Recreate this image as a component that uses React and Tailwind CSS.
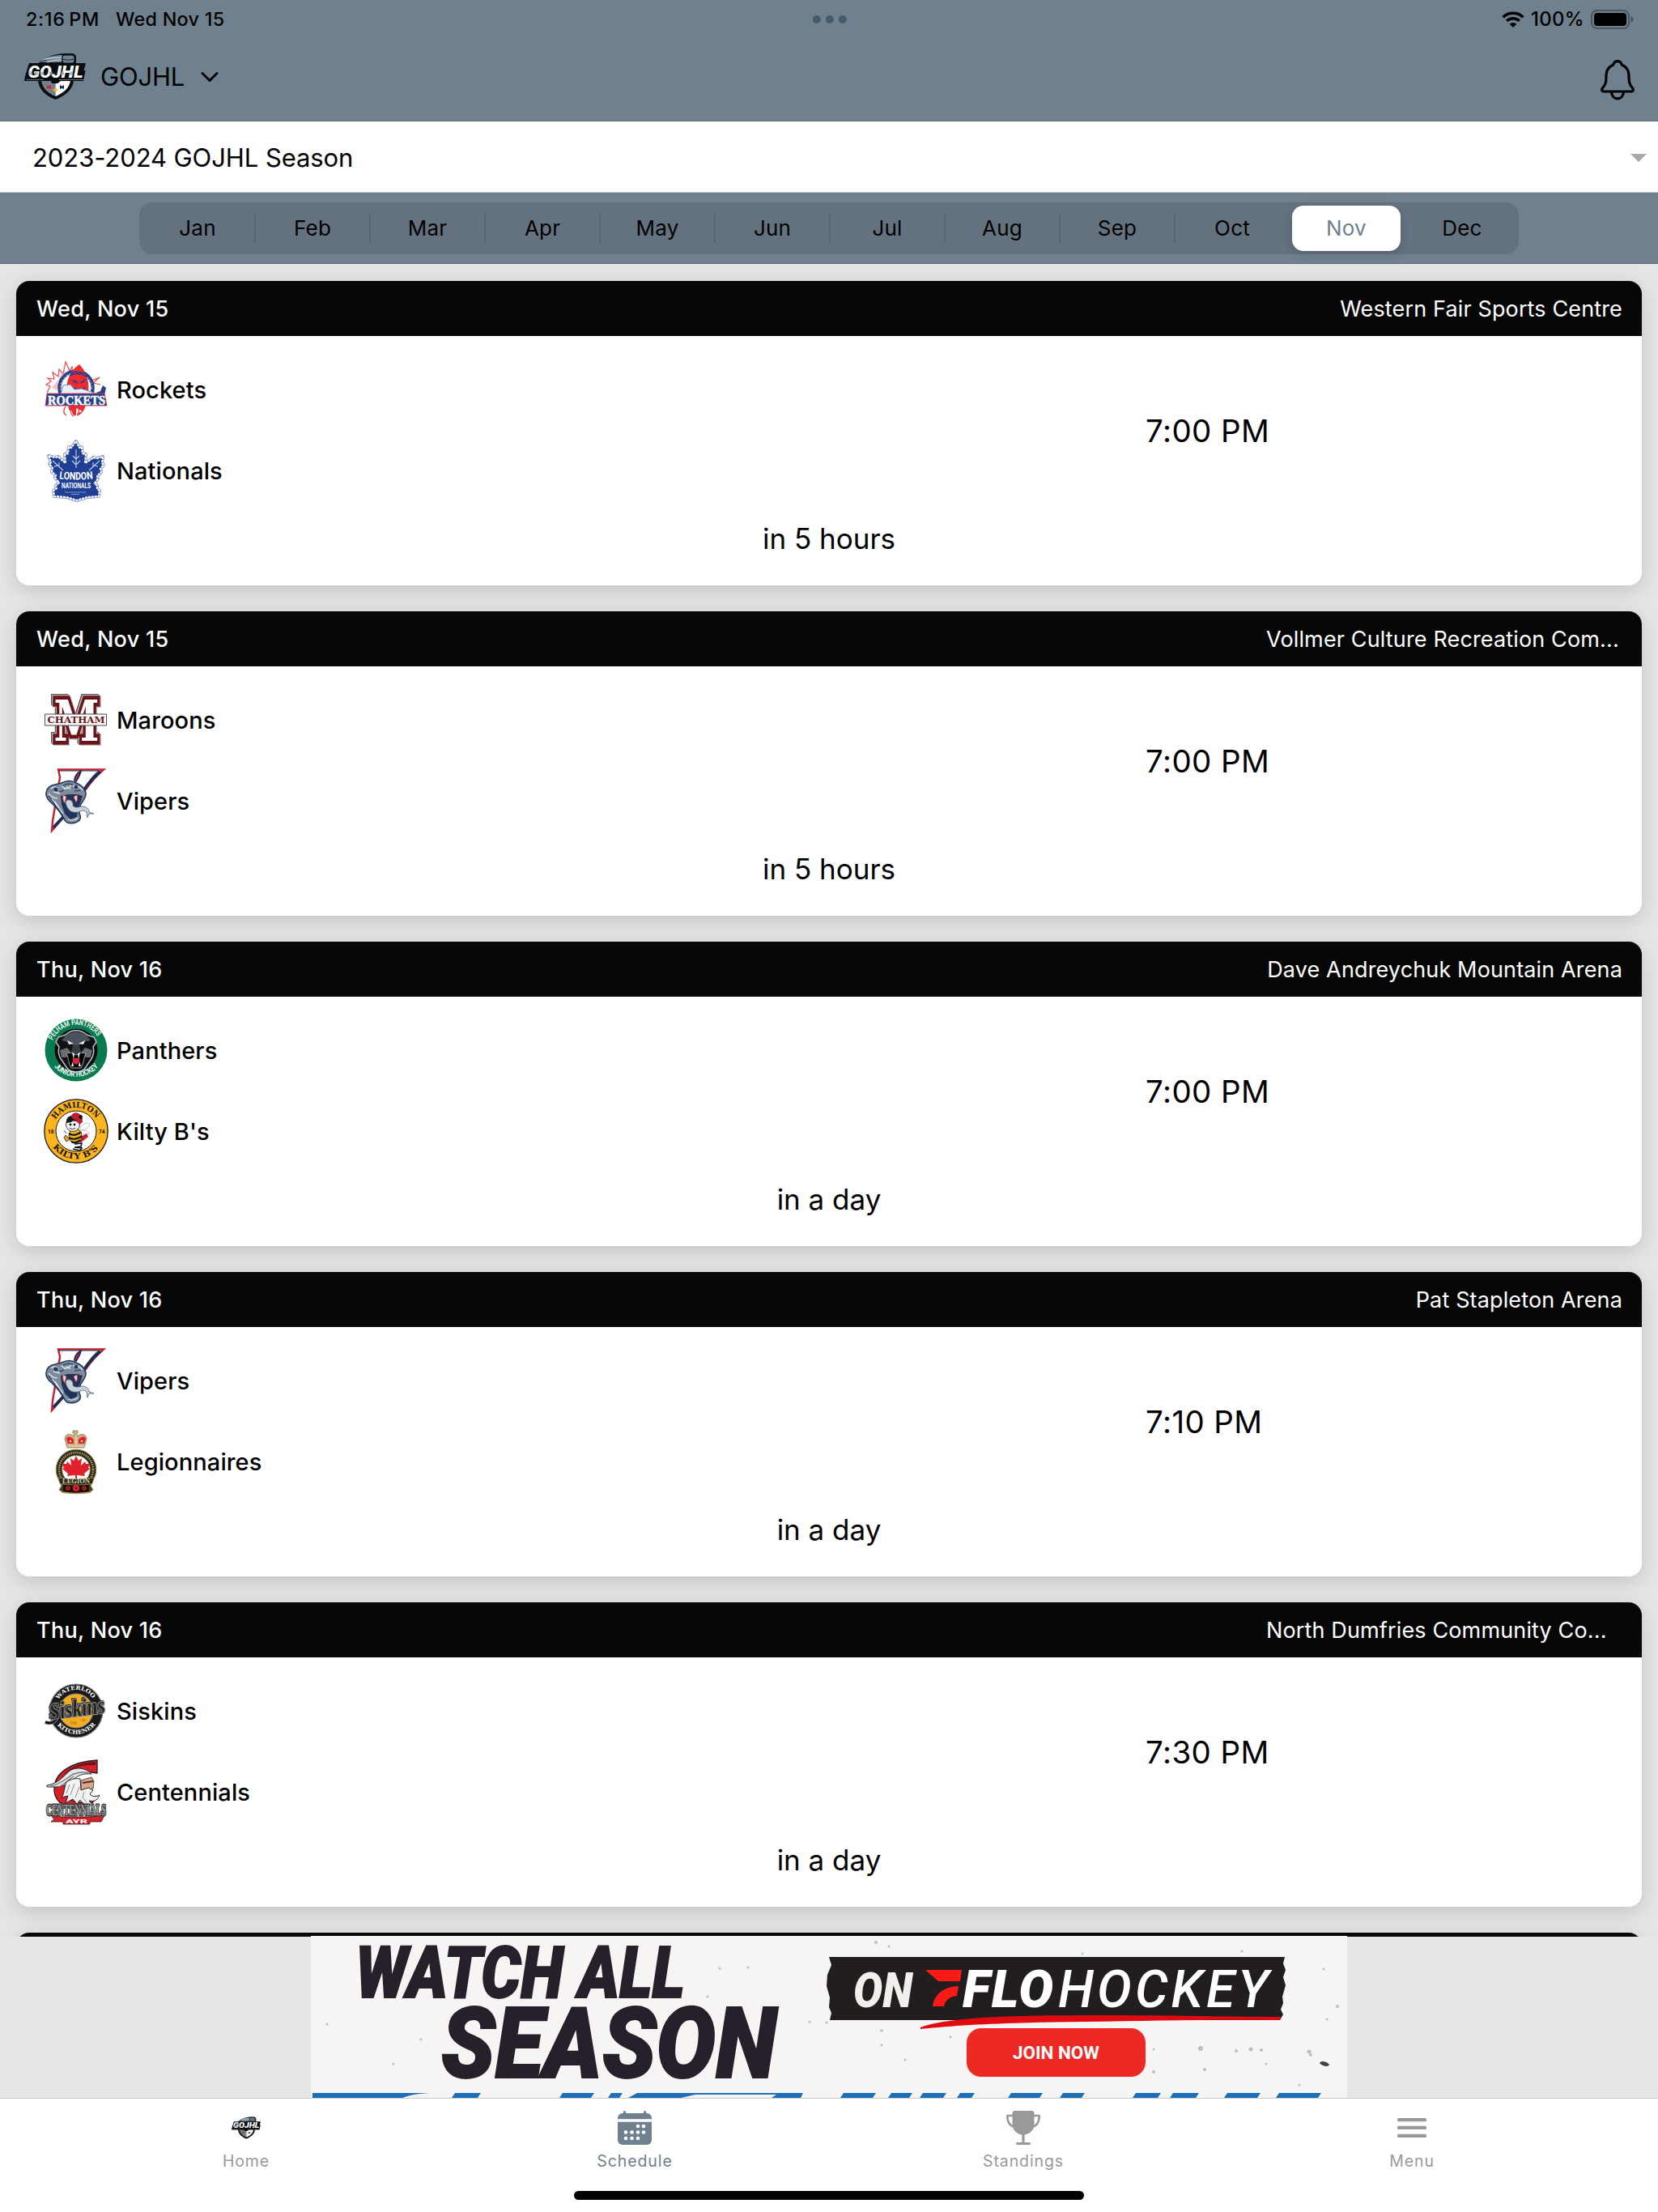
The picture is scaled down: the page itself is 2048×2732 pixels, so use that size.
const MONTHS = ['Jan', 'Feb', 'Mar', 'Apr', 'May', 'Jun', 'Jul', 'Aug', 'Sep', 'Oct', 'Nov', 'Dec'];
const SELECTED_MONTH = 'Nov';

// iPadOS glyphs
function WifiIcon() {
  return (
    <svg width="28" height="20" viewBox="0 0 28 20" fill="none" stroke="#000" strokeWidth="3.6">
      <path d="M1.6 7.2a18 18 0 0 1 24.8 0" />
      <path d="M6.2 11.8a11.4 11.4 0 0 1 15.6 0" />
      <path d="M14 20l-4.3-4.3a6.2 6.2 0 0 1 8.6 0z" fill="#000" stroke="none" />
    </svg>
  );
}

function BatteryIcon() {
  return (
    <svg width="54" height="24" viewBox="0 0 54 24">
      <rect x="1" y="1" width="46" height="22" rx="6.5" fill="none" stroke="#465865" strokeWidth="2" />
      <rect x="4" y="4" width="40" height="16" rx="4" fill="#000" />
      <path d="M49.5 8c2 .6 3 2.2 3 4s-1 3.4-3 4z" fill="#465865" />
    </svg>
  );
}

function BellIcon() {
  return (
    <svg width="42" height="50" viewBox="0 0 42 50" fill="none" stroke="#000" strokeWidth="3.2" strokeLinejoin="round">
      <path d="M21 1.7c-2.9 0-4.6 1.6-5.2 4.3C10.2 8.4 7 12.8 7 19c0 8.5-.6 11.3-4.4 15.6-1.8 2.2-1 4.4 1.4 4.4h34c2.4 0 3.2-2.2 1.4-4.4C35.6 30.3 35 27.5 35 19c0-6.2-3.2-10.6-8.8-13-.6-2.7-2.3-4.3-5.2-4.3z" />
      <path d="M13.5 39.5c.3 5 3.2 8.3 7.5 8.3s7.2-3.3 7.5-8.3" />
    </svg>
  );
}

function CalendarIcon() {
  const dots = [[25, 19], [32, 19], [10, 26.5], [17.5, 26.5], [25, 26.5], [32, 26.5], [10, 34], [17.5, 34], [25, 34]];
  return (
    <svg width="42" height="42" viewBox="0 0 42 42" fill="#6f808e">
      <path d="M6 3h1V1.500a1.500 1.500 0 0 1 3 0V3h22V1.500a1.500 1.500 0 0 1 3 0V3h1a6 6 0 0 1 6 6v1.300H0V9a6 6 0 0 1 6-6z" />
      <path d="M0 13.700h42V36a6 6 0 0 1-6 6H6a6 6 0 0 1-6-6z" />
      {dots.map(([x, y], i) => <circle key={i} cx={x} cy={y} r="2.3" fill="#fff" />)}
    </svg>
  );
}

function TrophyIcon() {
  return (
    <svg width="42" height="42" viewBox="0 0 42 42" fill="#999">
      <path d="M11 0h20a3 3 0 0 1 3.500 3v14C34.500 24 28 29.700 21 29.700S7.500 24 7.500 17V3A3 3 0 0 1 11 0z" />
      <path d="M8 6H1.500C1 12 3 17 8.500 19.500M34 6h6.500C41 12 39 17 33.500 19.500" fill="none" stroke="#999" strokeWidth="2.6" />
      <path d="M19.400 28h3.200v11.200h-3.200z" />
      <rect x="12" y="39" width="18" height="3" rx="1.5" />
    </svg>
  );
}

function MenuIcon() {
  return (
    <svg width="36" height="24" viewBox="0 0 36 24" fill="#999">
      <rect y="0" width="36" height="4.3" rx="1.6" />
      <rect y="9.8" width="36" height="4.3" rx="1.6" />
      <rect y="19.7" width="36" height="4.3" rx="1.6" />
    </svg>
  );
}

// League and team marks
function LeagueLogo({ className }) {
  return (
    <svg className={className} viewBox="0 0 76 57" overflow="visible">
      <path d="M17 32h44c0 12-10 20-22.500 25C26 52 17 44 17 32z" fill="#0a0d10" />
      <path d="M21 33h17.500v20C29 49 22 43 21 33z" fill="#6f808e" />
      <path d="M38.500 33H57c-1 10-9 16-18.500 20z" fill="#fff" />
      <path d="M28 39l2.500 1.500L33 39v5l-2.500-1-2.500 1z" fill="#d8232e" />
      <path d="M44 39l2.500 1.500L49 39v5l-2.500-1-2.500 1z" fill="#1b2a6b" />
      <path d="M38.500 41.500l1.300 2.300 2.400 1.200-2.400 1.200-1.300 2.300-1.300-2.300-2.400-1.200 2.400-1.200z" fill="#f5b323" />
      <path d="M16 13C26 5 36 0 52 0h6c4 0 6 2 6 5v8z" fill="#0a0d10" />
      <path d="M23 7C32 3 40 2 47 2l-1 9H17c5-1 8-2 11-3z" fill="#6f8896" />
      <path d="M22 8.500C31 5 40 5 46 5M28 11c8-3 14-3 18-3" stroke="#dfe6ea" fill="none" />
      <rect x="47" y="2" width="15" height="10" rx="3" fill="#6f808e" stroke="#0a0d10" />
      <path d="M48 7c4 1.500 9 1.500 13 0" stroke="#0a0d10" strokeWidth=".8" fill="none" />
      <path d="M6 12h70l-2.500 9h2L73 34H45l-4 3h-7l-1-3H0l1-6z" fill="#0a0d10" />
      <text x="4.5" y="29.5" textLength="68" lengthAdjust="spacingAndGlyphs" fontFamily="Roboto" fontWeight="900" fontStyle="italic" fontSize="21" fill="#fff">GOJHL</text>
      <path d="M5 24.500h4M12 24.500h5M20 24.500h4M31 24.500h4M45 24.500h4M56 24.500h4" stroke="#8fa0ac" strokeWidth="4" opacity=".7" />
      <path d="M3 32.400h21M43 32.400h30" stroke="#aab4bb" strokeWidth=".8" strokeDasharray="2 .6" />
    </svg>
  );
}

function RocketsLogo() {
  return (
    <svg width="80" height="80" viewBox="0 0 80 80" overflow="visible">
      <path d="M4 44l4-8-5-2 6-4-4-4 8 1-2-8 7 5 1-9 5 6 3-15 5 11 3-5 1 9M57 30l12-5-8 7 9 2" fill="none" stroke="#f0454a" strokeWidth="1.2" />
      <path d="M10 38l8-10 4-8 6-3-4 12-8 12z" fill="#f79a9b" opacity=".6" />
      <circle cx="40" cy="38" r="20.5" fill="#fff" stroke="#27408b" strokeWidth="4.5" />
      <circle cx="40" cy="38" r="19" fill="none" stroke="#fff" strokeWidth="1" strokeDasharray="2 2" />
      <path d="M29 53c-2-17-1-33 15-44 11 12 14 26 9 44-1 10-4 16-13 21-8-4-11-12-11-21z" fill="#ec2b32" />
      <path d="M32 23c8-4 15-3 21 1M33 21l6-3 12 2" stroke="#27408b" strokeWidth="1.6" fill="none" />
      <path d="M36 29l6 3M51 28l-5 4M38 38c4 3 9 3 13 0" stroke="#27408b" strokeWidth="2" fill="none" />
      <path d="M24 35l9-1 5 6 9-1 20 7-1 3H20z" fill="#e8f1f8" stroke="#5478b3" strokeWidth=".8" />
      <path d="M65 44l5-2 3-7 4 3-2 9-7 3z" fill="#27408b" />
      <path d="M30 60c-4 3-5 9-1 12 3 1 4-2 4-6 1 5 2 8 6 8 4-1 2-7 3-10 0 3 2 4 4 2" fill="none" stroke="#fff" strokeWidth="3" />
      <path d="M27 61c-3 4-3 9 1 11M34 64c-1 4 0 8 3 9M42 61c2 4 2 8-1 11" stroke="#ec2b32" strokeWidth="1.2" fill="none" />
      <path d="M4 45h71l3 15H2z" fill="#27408b" stroke="#ec2b32" strokeWidth=".8" />
      <text x="5" y="58.5" textLength="71" lengthAdjust="spacingAndGlyphs" fontFamily="Liberation Serif, serif" fontWeight="700" fontSize="17" fill="#fff" stroke="#fff" strokeWidth=".5">ROCKETS</text>
    </svg>
  );
}

function NationalsLogo() {
  const leaf = 'M40 4l4 8 3-1 1 8 4 1-1 11 8-5 2-2 5 1 7-2-1 8 2 2-4 5 1 4-5 5 1 3-4 6 3 3v4l3 2-1 7-14 1-13 4-13-4-15-1-1-7 4-3-1-3 4-4-5-6 1-3-5-4 1-5-4-5 2-2-3-8 8 2 4-1 3 3 6 5-1-11 4-1 1-8 3 1z';
  return (
    <svg width="80" height="80" viewBox="0 0 80 80" overflow="visible">
      <path d={leaf} fill="none" stroke="#8c9ccc" strokeWidth="4" strokeLinejoin="round" />
      <path d={leaf} fill="#1f3f95" stroke="#fff" strokeWidth="2.2" strokeDasharray="3 1" />
      <path d="M40 37V14M40 26l-4-4M40 26l4-4M40 33l-5-5M40 33l5-5M24 40L11 28M17 34l-4 1M19 36v-6M56 40l13-12M63 34l4 1M61 36v-6" stroke="#c4cee6" strokeWidth="1.1" fill="none" />
      <path id="london-arc" d="M18 50Q40 53 62 50" fill="none" />
      <text fontFamily="Roboto" fontWeight="700" fontSize="13" fill="#fff"><textPath href="#london-arc" startOffset="1" textLength="42" lengthAdjust="spacingAndGlyphs">LONDON</textPath></text>
      <text x="22" y="62" textLength="36" lengthAdjust="spacingAndGlyphs" fontFamily="Roboto" fontWeight="700" fontSize="9.5" fill="#fff">NATIONALS</text>
      <path d="M26 67h26M34 69.500h10" stroke="#8c9ccc" strokeWidth=".9" />
    </svg>
  );
}

function MaroonsLogo() {
  return (
    <svg width="80" height="80" viewBox="0 0 80 80" overflow="visible">
      <text
        x="12.5" y="66" textLength="56" lengthAdjust="spacingAndGlyphs"
        fontFamily="DejaVu Serif, serif" fontWeight="700" fontSize="70"
        fill="#fff" stroke="#6b1319" strokeWidth="9.5" paintOrder="stroke"
        className="[filter:drop-shadow(1px_1px_0_#cfcfcf)_drop-shadow(-1px_-1px_0_#cfcfcf)_drop-shadow(0.6px_0.6px_0_#4d4d4d)_drop-shadow(-0.6px_-0.6px_0_#4d4d4d)]"
      >M</text>
      <path d="M1.500 33h76v14h-76z" fill="#fff" stroke="#4d4d4d" />
      <text x="4.5" y="44.2" textLength="71" lengthAdjust="spacingAndGlyphs" fontFamily="DejaVu Serif, serif" fontWeight="700" fontSize="11.5" fill="#6b1319">CHATHAM</text>
    </svg>
  );
}

function VipersLogo() {
  return (
    <svg width="80" height="80" viewBox="0 0 80 80">
      {/* pennant behind the snake */}
      <path d="M18 1.500h56C64 10 58 17 52 26L24 61 10 77l1-12 9-54z" fill="#fff" stroke="#c4202e" strokeWidth="2.4" />
      <path d="M18 3h50C60 9 55 17 50 26L24 59 12 72" fill="none" stroke="#1c2c55" strokeWidth="1" />
      <path d="M50 26C57 16 62 10 70 4M12 73l13-14" stroke="#1c2c55" strokeWidth="3.6" fill="none" />
      <path d="M38 15c0-6 3-9 8-12-1 5-3 8-6 13z" fill="#d0202e" stroke="#1c2c55" strokeWidth="1.8" />
      <path d="M3 30c1-6 5-9 11-10l8-2c6-3 13-3 18 0 6 2 10 6 12 12 1 5-3 9-6 14-2 4-2 8-2 12 3 5 1 9-5 11-7 2-12 0-14-5-4-8-9-13-14-18C6 40 2 36 3 30z" fill="#7d8b9b" stroke="#22355c" strokeWidth="1.5" />
      <path d="M21 34l9-2h11l7 2-3 9-3 10-1 7-8 3-7-7-4-11z" fill="#20325a" />
      <path d="M6 31c3 4 6 6 11 6M9 25c3-3 7-3 9 1M36 22c5-1 9 1 12 5M22 22c4 4 8 4 12-1M14 41l10 15M10 38l9 11M30 63c5 2 9 1 12-2M25 26l4-3 4 3M12 29l8 2" stroke="#dce2e8" strokeWidth="1.3" fill="none" />
      <path d="M6 34l12 17 8 13M20 29l5-2M38 28l8-1M24 21l6-2 6 1" stroke="#20325a" strokeWidth="1.2" fill="none" />
      <circle cx="15" cy="26" r="2.5" fill="#20325a" /><circle cx="40" cy="23" r="2.2" fill="#20325a" />
      <path d="M24 33c-1 4 0 7 2 10l2-8zM41 33c1 3 1 6-1 9l-3-7z" fill="#f4d9d8" stroke="#cf3a43" strokeWidth=".9" />
      <path d="M29 39c5-1 8 3 7 7 4 4 8 1 13 1 5 1 7 4 7 7l6 2-6 0-2 5-1-7c-4-3-6-2-10 0-6 1-11 0-14-6-2-4-3-7 0-9z" fill="#c9d1d9" stroke="#4b5e78" strokeWidth=".8" />
    </svg>
  );
}

function PanthersLogo() {
  return (
    <svg width="80" height="80" viewBox="0 0 80 80" overflow="visible">
      <circle cx="40" cy="40" r="38.5" fill="#0a7a50" />
      <circle cx="40" cy="40" r="26.5" fill="#0b0b0c" />
      <path d="M15 30l3-6 9-3c8-7 18-7 26 0l9 3 3 6-4 6c2 7 0 12-3 16l-6 9c-3 5-8 6-12 6s-9-1-12-6l-6-9c-3-4-5-9-3-16z" fill="#101113" stroke="#b8bdc1" strokeWidth="1.5" />
      <path d="M27 22c8-6 18-6 26 0l5 6-9 2-6 4h-6l-6-4-9-2z" fill="#48535d" />
      <path d="M20 40l9-3 4 5-5 7h-6zM60 40l-9-3-4 5 5 7h6z" fill="#676c70" />
      <path d="M36 34h8l2 8-6 3-6-3z" fill="#353c43" />
      <path d="M29 28l8 4-6 1zM51 28l-8 4 6 1z" fill="#eef1f2" />
      <path d="M28 44c3 5 2 12 6 18h12c4-6 3-13 6-18l-6-1-6 3-6-3z" fill="#000" stroke="#9ba0a4" strokeWidth="1" />
      <path d="M35 43l2 8 1-7zM45 43l-2 8-1-7zM34 60l2-6 1 6zM46 60l-2-6-1 6z" fill="#f3f3f3" />
      <path d="M36 50h8v5l-4 3-4-3z" fill="#e2213f" />
      <path id="panther-top" d="M11 28A31.500 31.500 0 0 1 69 28" fill="none" />
      <path id="panther-bottom" d="M11.500 59A36 36 0 0 0 68.500 59" fill="none" />
      <g fontFamily="Roboto" fontWeight="700" fontSize="9.5" fill="#e9f5ef">
        <text><textPath href="#panther-top" textLength="68" lengthAdjust="spacingAndGlyphs">PELHAM PANTHERS</textPath></text>
        <text><textPath href="#panther-bottom" startOffset="2" textLength="62" lengthAdjust="spacingAndGlyphs">JUNIOR HOCKEY</textPath></text>
      </g>
    </svg>
  );
}

function KiltyLogo() {
  return (
    <svg width="80" height="80" viewBox="0 0 80 80" overflow="visible">
      <circle cx="40" cy="40" r="39.2" fill="#fcb51c" stroke="#161616" strokeWidth="1.3" />
      <circle cx="40" cy="40" r="25" fill="#fff" stroke="#161616" strokeWidth="1" />
      <path d="M45 36c4-6 9-7 12-5-1 5-6 8-11 8 5 0 9 1 10 4-4 2-8 1-11-2z" fill="#fff" stroke="#bbb" strokeWidth=".9" />
      <path d="M46 47l7-4 2 4-9 7-8-1z" fill="#c21f2c" />
      <ellipse cx="39" cy="46" rx="8" ry="9" fill="#f3b51d" stroke="#151515" strokeWidth=".8" />
      <path d="M31 43c5 3 11 2 15-2M31 48c5 3 12 2 16-2M34 53c4 2 8 1 11-2" stroke="#151515" strokeWidth="2.2" fill="none" />
      <path d="M27 45l5 5-4 3-3-5zM25 39l3 4" fill="#e8a51d" stroke="#151515" strokeWidth=".8" />
      <circle cx="36" cy="32" r="8.5" fill="#f1f1f1" stroke="#151515" strokeWidth=".8" />
      <path d="M28 30c-1-6 4-10 9-9l7 4-1 5c-4-3-7-3-9-1z" fill="#171717" />
      <circle cx="33" cy="32" r="1.4" fill="#151515" /><circle cx="38" cy="32" r="1.4" fill="#151515" />
      <path d="M32 36c2 2 5 2 7 0" stroke="#151515" strokeWidth="1" fill="none" />
      <path d="M34 23c0-5 5-7 9-5l4 3 1 8-4 3c-2-4-6-6-10-9z" fill="#bf1e2e" />
      <path d="M43 23c0-3 4-4 5-1l-1 4z" fill="#111" />
      <path d="M38 56l9-1-1 4-8 1 9 1-2 3-9-2" fill="none" stroke="#151515" strokeWidth="1.6" />
      <text x="5" y="42.5" fontFamily="Roboto" fontWeight="700" fontSize="6.5" fill="#161616">18</text>
      <text x="68" y="42.5" fontFamily="Roboto" fontWeight="700" fontSize="6.5" fill="#161616">74</text>
      <path id="kilty-top" d="M14.500 26A29.200 29.200 0 0 1 65.500 26" fill="none" />
      <path id="kilty-bottom" d="M9.500 57A35.500 35.500 0 0 0 70.500 57" fill="none" />
      <g fontFamily="DejaVu Serif, serif" fontWeight="700" fontSize="10" fill="#161616">
        <text><textPath href="#kilty-top" textLength="60" lengthAdjust="spacingAndGlyphs">HAMILTON</textPath></text>
        <text><textPath href="#kilty-bottom" startOffset="3" textLength="65" lengthAdjust="spacingAndGlyphs">KILTY B'S</textPath></text>
      </g>
    </svg>
  );
}

function LegionnairesLogo() {
  return (
    <svg width="80" height="80" viewBox="0 0 80 80" overflow="visible">
      <path d="M29 23l-3-11c0-6 7-7 11-3V5h-1V2h6v3h-1v4c5-4 12-3 12 3l-3 11z" fill="#c9b183" stroke="#8d7750" strokeWidth=".8" />
      <path d="M30 18l-2-6c1-4 6-3 9 1v5zM50 18l2-6c-1-4-6-3-9 1v5z" fill="#e3212b" />
      <path d="M40 8v12M30 21h20" stroke="#e8d9b0" strokeWidth="1.6" />
      <circle cx="33" cy="15" r="1.2" fill="#f3e6c0" /><circle cx="47" cy="15" r="1.2" fill="#f3e6c0" />
      <circle cx="40" cy="50" r="21" fill="#fff" stroke="#302b18" strokeWidth="7.5" />
      <circle cx="40" cy="50" r="24.8" fill="none" stroke="#9a8850" strokeWidth="1" />
      <circle cx="40" cy="50" r="21" fill="none" stroke="#a59b6c" strokeWidth="2.5" strokeDasharray="1.5 1.2" />
      <circle cx="40" cy="50" r="17.3" fill="none" stroke="#9a8850" strokeWidth=".8" />
      <path d="M40 33l3 6 4-3-1 9 5-5 1 3h5l-2 5 2 1-7 6 1 3-10-1v5h-2v-5l-10 1 1-3-7-6 2-1-2-5h5l1-3 5 5-1-9 4 3z" fill="#e0202c" />
      <path d="M18 62l4 8-3 5 4 3h34l4-3-3-5 4-8-8 3v5H26v-5z" fill="#4b4226" stroke="#9a8850" strokeWidth=".8" />
      <path d="M24 69h32v8c-10 3-22 3-32 0z" fill="#171208" />
      <path d="M18 60c14 2 30 2 44 0l-2 7.500c-13 2-27 2-40 0z" fill="#2b2815" stroke="#a59b6c" strokeWidth=".7" />
      <text x="23" y="67.3" textLength="34" lengthAdjust="spacingAndGlyphs" fontFamily="Liberation Serif, serif" fontWeight="700" fontSize="7.5" fill="#d6d0a8">LEGION</text>
      <circle cx="40" cy="73" r="4" fill="#e0202c" /><circle cx="40" cy="73" r="1.2" fill="#222" />
      <circle cx="30" cy="73" r="2.8" fill="#c51c26" /><circle cx="50" cy="73" r="2.8" fill="#c51c26" />
      <circle cx="30" cy="73" r=".9" fill="#222" /><circle cx="50" cy="73" r=".9" fill="#222" />
      <path d="M22 78c12 2 24 2 36 0" stroke="#b7955c" strokeWidth="1.3" fill="none" />
    </svg>
  );
}

function SiskinsLogo() {
  return (
    <svg width="80" height="80" viewBox="0 0 80 80" overflow="visible">
      <circle cx="40" cy="40" r="33" fill="#1a1a1a" stroke="#8d8d8d" strokeWidth="1.2" />
      <circle cx="40" cy="40" r="21" fill="#f3ad22" stroke="#8d8d8d" strokeWidth="1" />
      <path d="M33 24h8v4h-6zM46 27h5v3h-4zM32 53h9v4h-7zM46 50h6v3h-5z" fill="#d1931b" />
      <path d="M2 54c8 3 12-1 15-6" stroke="#888" strokeWidth="4.5" fill="none" />
      <path d="M2 54c8 3 12-1 15-6" stroke="#111" strokeWidth="3" fill="none" />
      <text
        x="7" y="47" textLength="69" lengthAdjust="spacingAndGlyphs" transform="rotate(-7 40 40)"
        fontFamily="Liberation Serif, serif" fontWeight="700" fontStyle="italic" fontSize="29"
        fill="#1a1a1a" stroke="#a6a6a6" strokeWidth="2" strokeLinejoin="round" paintOrder="stroke"
        className="[filter:drop-shadow(0.8px_0.8px_0_#222)_drop-shadow(-0.8px_-0.5px_0_#222)]"
      >Siskins</text>
      <path id="siskins-top" d="M18 27A25 25 0 0 1 62 27" fill="none" />
      <path id="siskins-bottom" d="M16 57A30.500 30.500 0 0 0 64 57" fill="none" />
      <g fontFamily="DejaVu Serif, serif" fontWeight="700" fontSize="7" fill="#fff">
        <text><textPath href="#siskins-top" startOffset="1" textLength="50" lengthAdjust="spacingAndGlyphs">WATERLOO</textPath></text>
        <text><textPath href="#siskins-bottom" startOffset="1" textLength="54" lengthAdjust="spacingAndGlyphs">KITCHENER</textPath></text>
      </g>
    </svg>
  );
}

function CentennialsLogo() {
  return (
    <svg width="80" height="80" viewBox="0 0 80 80" overflow="visible">
      <path d="M66 1v16l-7-1C45 12 28 20 26 34c-1 12 8 19 20 19 8 0 14-3 19-8-3 10-12 15-25 15-18 0-28-11-27-25C14 16 34 3 66 1z" fill="#d9202a" stroke="#1d1d1f" strokeWidth="1.3" />
      <path d="M64 3v4C45 6 31 12 22 22 30 10 44 4 64 3z" fill="#731218" />
      <path d="M4 32c14-2 20-11 28-18 8-5 20-4 27 4-11-1-17 2-23 7-8 8-17 9-23 9l-9 0z" fill="#e6e7e8" stroke="#29292b" strokeWidth="1" />
      <path d="M8 33c14-2 21-11 29-15 6-2 12-3 19-1M18 34c8-3 12-9 19-13" stroke="#77797c" strokeWidth="1.4" fill="none" />
      <path d="M46 26l13-4 3 5-1 9-15 2z" fill="#d7a98a" stroke="#29292b" strokeWidth=".8" />
      <path d="M48 29l13-2" stroke="#4b2f26" strokeWidth="1.8" />
      <path d="M28 28c6-4 11-5 17-4l1 14 9-3 6 3-4 5c4 4 8 3 12 1-3 8-8 8-13 7l5 6c-8 0-13-2-16-7l-4 5-5-6-9 5 3-9-8 2c4-5 3-12 6-19z" fill="#f2f2f2" stroke="#29292b" strokeWidth="1" />
      <path d="M32 31l-4 11M38 30l-5 14M44 34l-5 13M50 40l-2 7 5 6" stroke="#8b8d90" strokeWidth="1" fill="none" />
      <path d="M8 68l14 3 36 0 18-4-5 10H57v3H24v-3H9l4-3z" fill="#d9202a" stroke="#2a1214" strokeWidth=".8" />
      <text
        x="3" y="69" textLength="74" lengthAdjust="spacingAndGlyphs" fontFamily="Liberation Serif, serif" fontWeight="700" fontSize="19"
        fill="#9a9c9e" stroke="#3c3d40" strokeWidth="3" paintOrder="stroke"
      >CENTENNIALS</text>
      <text x="27" y="79" textLength="27" lengthAdjust="spacingAndGlyphs" fontFamily="Roboto" fontWeight="900" fontSize="8" fill="#fff">AYR</text>
    </svg>
  );
}

const TEAMS = {
  Rockets: RocketsLogo,
  Nationals: NationalsLogo,
  Maroons: MaroonsLogo,
  Vipers: VipersLogo,
  Panthers: PanthersLogo,
  "Kilty B's": KiltyLogo,
  Legionnaires: LegionnairesLogo,
  Siskins: SiskinsLogo,
  Centennials: CentennialsLogo,
};

const GAMES = [
  { date: 'Wed, Nov 15', venue: 'Western Fair Sports Centre', away: 'Rockets', home: 'Nationals', time: '7:00 PM', countdown: 'in 5 hours' },
  { date: 'Wed, Nov 15', venue: 'Vollmer Culture Recreation Com...', away: 'Maroons', home: 'Vipers', time: '7:00 PM', countdown: 'in 5 hours' },
  { date: 'Thu, Nov 16', venue: 'Dave Andreychuk Mountain Arena', away: 'Panthers', home: "Kilty B's", time: '7:00 PM', countdown: 'in a day' },
  { date: 'Thu, Nov 16', venue: 'Pat Stapleton Arena', away: 'Vipers', home: 'Legionnaires', time: '7:10 PM', countdown: 'in a day' },
  { date: 'Thu, Nov 16', venue: 'North Dumfries Community Co...', away: 'Siskins', home: 'Centennials', time: '7:30 PM', countdown: 'in a day' },
];

function StatusBar() {
  return (
    <div className="grid h-12 grid-cols-3 items-center pr-[29px] pl-8 text-[23.3px] font-medium tracking-[0.3px]">
      <div className="flex gap-5">
        <span className="whitespace-pre tracking-[0.7px]">2:16{'\u2009'}PM</span>
        <span>Wed Nov 15</span>
      </div>
      <div className="flex justify-center gap-1.5">
        <span className="size-2.5 rounded-full bg-[#465a69]" />
        <span className="size-2.5 rounded-full bg-[#465a69]" />
        <span className="size-2.5 rounded-full bg-[#465a69]" />
      </div>
      <div className="flex items-center justify-end">
        <WifiIcon />
        <span className="mr-2 ml-2 text-[24px] tracking-[0.3px]">100%</span>
        <BatteryIcon />
      </div>
    </div>
  );
}

function Header() {
  return (
    <header className="h-[150px] border-b border-[#5c6c79] bg-[#6f808e]">
      <StatusBar />
      <div className="flex h-[93px] items-center pr-[29px] pl-[30px]">
        <LeagueLogo className="h-[57px] w-[76px]" />
        <span className="mt-px ml-[18px] text-[31px] tracking-[-0.2px]">GOJHL</span>
        <svg className="ml-[19px]" width="24" height="14" viewBox="0 0 24 14" fill="none" stroke="#000" strokeWidth="3" strokeLinecap="round" strokeLinejoin="round">
          <path d="M3 2.500l9 9 9-9" />
        </svg>
        <div className="ml-auto pt-2">
          <BellIcon />
        </div>
      </div>
    </header>
  );
}

function MonthPicker() {
  return (
    <div className="flex h-[88px] items-center justify-center border-b border-[#5c6c79] bg-[#6f808e]">
      <div className="flex h-16 w-[1704px] items-center rounded-2xl bg-[#64727f]">
        {MONTHS.map((month, i) => {
          const selected = month === SELECTED_MONTH;
          const divided = i > 0 && !selected && MONTHS[i - 1] !== SELECTED_MONTH;
          return (
            <div key={month} className={`flex h-9 flex-1 items-center justify-center border-l-2 text-[26px] tracking-[0.2px] ${divided ? 'border-[#566673]' : 'border-transparent'}`}>
              {selected ? (
                <span className="-ml-0.5 flex h-14 w-[134px] items-center justify-center rounded-[14px] bg-white text-[#6f808e] shadow-[0_4px_12px_rgba(0,0,0,0.15)]">{month}</span>
              ) : month}
            </div>
          );
        })}
      </div>
    </div>
  );
}

function TeamRow({ name }) {
  const Logo = TEAMS[name];
  return (
    <div className="flex h-[100px] items-center gap-2.5">
      <Logo />
      <span className="pt-0.5 text-[29px] font-medium tracking-[0.1px]">{name}</span>
    </div>
  );
}

function GameCard({ game }) {
  const clipped = game.venue.endsWith('...');
  return (
    <article className="h-[376px] shrink-0 rounded-2xl bg-white shadow-[0_6px_24px_rgba(0,0,0,0.15)]">
      <div className="flex h-[68px] items-center justify-between rounded-t-2xl bg-[#070707] pt-0.5 pr-6 pl-[25px] text-[27px] text-white">
        <span className="font-medium tracking-[0.3px]">{game.date}</span>
        <span className={`w-[440px] whitespace-nowrap tracking-[0.14px] ${clipped ? 'text-left' : 'text-right'}`}>{game.venue}</span>
      </div>
      <div className="flex pt-4 pl-[34px]">
        <div className="w-[1361px]">
          <TeamRow name={game.away} />
          <TeamRow name={game.home} />
        </div>
        <div className="flex items-center pt-1 text-[38.5px] tracking-[0.4px]">{game.time}</div>
      </div>
      <p className="flex h-[68px] items-center justify-center text-[35px]">{game.countdown}</p>
    </article>
  );
}

function AdBanner() {
  const blocks = [[178, 32], [311, 39], [371, 14], [658, 40], [717, 26], [756, 29], [802, 18], [865, 39], [929, 27], [1019, 31], [1065, 32], [1132, 41], [1196, 52]];
  const specks = [[20, 109, 1.5], [136, 128, 1.5], [102, 158, 1.5], [490, 75, 1.5], [505, 40, 1.5], [540, 39, 1.5], [616, 106, 1.5], [698, 8, 2], [714, 13, 1.5], [1251, 41, 1.5], [705, 117, 1.8], [705, 135, 1.5], [790, 125, 1.5], [734, 153, 1.5], [637, 107, 1.5], [1099, 139, 3], [1143, 142, 2], [1161, 140, 2.5], [1174, 141, 2], [1180, 158, 1.5], [1233, 143, 2.5], [1235, 147, 2], [1104, 165, 2], [1041, 168, 2], [1221, 184, 1.5], [1268, 87, 2], [1255, 103, 1.5], [953, 22, 1.5], [1150, 19, 1.5], [1041, 140, 1.5]];
  const heading = { fontFamily: 'Roboto', fontWeight: 900, fontStyle: 'italic', fill: '#271f29', stroke: '#271f29', strokeWidth: 2, lengthAdjust: 'spacingAndGlyphs' };
  return (
    <svg width="1280" height="200" viewBox="0 0 1280 200">
      <rect width="1280" height="200" fill="#f6f5f3" />
      {specks.map(([x, y, r], i) => <circle key={i} cx={x} cy={y} r={r} fill="#8f9093" opacity=".55" />)}
      <ellipse cx="1252" cy="158" rx="6" ry="2.5" transform="rotate(15 1252 158)" fill="#3d4145" />
      <text {...heading} x="55" y="76" fontSize="88" textLength="407">WATCH ALL</text>
      <text {...heading} x="161" y="175" fontSize="123" textLength="414">SEASON</text>
      <path d="M644 26h559l-2 8 3 8-3 9 3 10-4 14 1 8-3 8 3 6-4 7H641l2-9-3-7 1-12-4-14 1-14 5-12-3-10z" fill="#221e1f" />
      <text x="670" y="88" fontFamily="Roboto" fontWeight="900" fontStyle="italic" fontSize="61" textLength="73" lengthAdjust="spacingAndGlyphs" fill="#f1efec">ON</text>
      <path d="M759 42h45l-2 14h-27zM800 62l-2 12c-9 1-14 5-16 13h-14c2-14 12-24 32-25z" fill="#fb1a15" />
      <text x="805" y="88" fontFamily="Roboto" fontWeight="900" fontStyle="italic" fontSize="64" textLength="112" lengthAdjust="spacing" fill="#fff">FLO</text>
      <text x="923" y="88" fontFamily="Roboto" fontWeight="500" fontStyle="italic" fontSize="64" textLength="260" lengthAdjust="spacing" fill="#fff">HOCKEY</text>
      <path d="M753 113C790 99 880 98 980 98c90 0 150 2 218 2l-1 4c-90-1-160 1-240 2-90 1-150 3-204 9z" fill="#e00b10" />
      <rect x="810" y="114" width="221" height="60" rx="18" fill="#ee2824" />
      <text x="867" y="152" fontFamily="Roboto" fontWeight="700" fontSize="22" textLength="107" lengthAdjust="spacingAndGlyphs" fill="#fff">JOIN NOW</text>
      <path d="M2 194h145q-22 1-34 6H2zM403 194h205l-3 6h-36l6-4-100 0-18 4h-65z" fill="#1c6fb6" />
      {blocks.map(([x, w]) => <path key={x} d={`M${x} 194h${w}l-4 6h-${w}z`} fill="#1c6fb6" />)}
    </svg>
  );
}

function TabItem({ icon, label, active }) {
  return (
    <div className={`flex flex-1 flex-col items-center ${active ? 'text-[#6f808e]' : 'text-[#999]'}`}>
      <div className="mt-[15px] flex h-[42px] items-center">{icon}</div>
      <span className="mt-2 text-[19.5px] leading-6 tracking-[0.9px]">{label}</span>
    </div>
  );
}

export default function App() {
  return (
    <div className="flex h-[2732px] w-[2048px] flex-col overflow-hidden bg-[#e5e5e5] font-[Inter,sans-serif] text-black">
      <Header />

      <div className="flex h-[88px] items-center justify-between border-b border-[#c8c8c8] bg-white pt-[3px] pr-3.5 pl-10 text-[31px] tracking-[-0.08px]">
        <span>2023-2024 GOJHL Season</span>
        <svg width="20" height="10" viewBox="0 0 20 10"><path d="M0 0h20L10 10z" fill="#a9a9a9" /></svg>
      </div>

      <MonthPicker />

      <main className="flex h-[2066px] shrink-0 flex-col gap-8 overflow-hidden px-5 pt-[21px]">
        {GAMES.map((game) => <GameCard key={game.venue} game={game} />)}
        <div className="h-[68px] shrink-0 rounded-t-2xl bg-[#070707] shadow-[0_6px_24px_rgba(0,0,0,0.15)]" />
      </main>

      <div className="-mt-px flex h-[200px] shrink-0 justify-center">
        <AdBanner />
      </div>

      <nav className="flex flex-1 flex-col border-t border-[#c8c8c8] bg-white">
        <div className="flex h-[114px] px-16">
          <TabItem icon={<LeagueLogo className="h-7 w-9" />} label="Home" />
          <TabItem icon={<CalendarIcon />} label="Schedule" active />
          <TabItem icon={<TrophyIcon />} label="Standings" />
          <TabItem icon={<MenuIcon />} label="Menu" />
        </div>
        <div className="h-[11px] w-[630px] self-center rounded-full bg-black" />
      </nav>
    </div>
  );
}
